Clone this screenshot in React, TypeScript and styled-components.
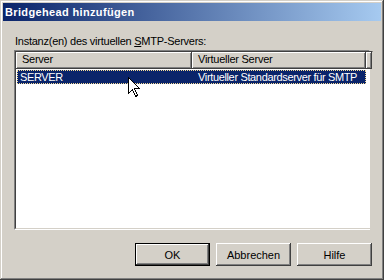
import React from "react";
import styled, { createGlobalStyle } from "styled-components";

const Global = createGlobalStyle`
  html, body { margin: 0; padding: 0; background: #d4d0c8; }
  body { font-family: "Liberation Sans", Arial, sans-serif; font-size: 11px; }
`;

const Window = styled.div`
  position: relative;
  width: 384px;
  height: 280px;
  box-sizing: border-box;
  padding: 3px;
  background: #d4d0c8;
  box-shadow: inset -1px -1px #404040, inset 1px 1px #d4d0c8,
    inset -2px -2px #808080, inset 2px 2px #ffffff;
  display: flex;
  flex-direction: column;
  overflow: hidden;
`;

const TitleBar = styled.div`
  height: 18px;
  display: flex;
  align-items: center;
  padding-left: 2px;
  background: linear-gradient(to right, #0a246a, #a6caf0);
  color: #ffffff;
  font-weight: bold;
  font-size: 11px;
  letter-spacing: 0.35px;
`;

const Body = styled.div`
  flex: 1;
  display: flex;
  flex-direction: column;
  padding: 14px 0 0 11px;
`;

const Label = styled.div`
  height: 13px;
  line-height: 13px;
  padding-left: 1px;
  color: #000;
  margin-bottom: 2px;
  letter-spacing: -0.25px;
  u { text-decoration: underline; }
`;

const ListBox = styled.div`
  width: 356px;
  height: 180px;
  box-sizing: border-box;
  background: #ffffff;
  border-style: solid;
  border-width: 1px;
  border-color: #808080 #ffffff #ffffff #808080;
  display: flex;
`;

const ListInner = styled.div`
  flex: 1;
  border-style: solid;
  border-width: 1px;
  border-color: #404040 #d4d0c8 #d4d0c8 #404040;
  display: flex;
  flex-direction: column;
`;

const Header = styled.div`
  display: flex;
  height: 17px;
  background: #d4d0c8;
`;

const HeaderCell = styled.div<{ $w?: number }>`
  box-sizing: border-box;
  ${(p) => (p.$w ? `width: ${p.$w}px;` : "flex: 1;")}
  height: 17px;
  line-height: 14px;
  padding-left: 6px;
  color: #000;
  letter-spacing: -0.25px;
  white-space: nowrap;
  overflow: hidden;
  box-shadow: inset -1px -1px #404040, inset 1px 1px #ffffff,
    inset -2px -2px #808080;
`;

const Row = styled.div<{ $selected?: boolean }>`
  display: flex;
  height: 14px;
  margin: 1px 0 0 1px;
  width: 349px;
  box-sizing: border-box;
  background: ${(p) => (p.$selected ? "#0a246a" : "transparent")};
  color: ${(p) => (p.$selected ? "#ffffff" : "#000")};
  outline: ${(p) => (p.$selected ? "1px dotted #f5db95" : "none")};
  outline-offset: -1px;
`;

const Cell = styled.div<{ $w?: number }>`
  ${(p) => (p.$w ? `width: ${p.$w}px;` : "flex: 1;")}
  line-height: 14px;
  padding-left: 3px;
  white-space: nowrap;
  letter-spacing: -0.35px;
`;

const ButtonRow = styled.div`
  display: flex;
  justify-content: flex-end;
  gap: 6px;
  margin-top: 13px;
  padding-right: 9px;
`;

const Button = styled.div<{ $default?: boolean }>`
  width: 75px;
  height: 23px;
  box-sizing: border-box;
  display: flex;
  align-items: center;
  justify-content: center;
  color: #000;
  background: #d4d0c8;
  ${(p) =>
    p.$default
      ? `border: 1px solid #000;
         box-shadow: inset -1px -1px #404040, inset 1px 1px #ffffff, inset -2px -2px #808080;`
      : `box-shadow: inset -1px -1px #404040, inset 1px 1px #ffffff, inset -2px -2px #808080, inset 2px 2px #d4d0c8;`}
`;

const Cursor = styled.svg`
  position: absolute;
  left: 128px;
  top: 77px;
`;

export default function App() {
  return (
    <>
      <Global />
      <Window>
        <TitleBar>Bridgehead hinzufügen</TitleBar>
        <Body>
          <Label>
            Instanz(en) des virtuellen <u>S</u>MTP-Servers:
          </Label>
          <ListBox>
            <ListInner>
              <Header>
                <HeaderCell $w={176}>Server</HeaderCell>
                <HeaderCell $w={174}>Virtueller Server</HeaderCell>
                <HeaderCell />
              </Header>
              <Row $selected>
                <Cell $w={175}>SERVER</Cell>
                <Cell>Virtueller Standardserver für SMTP</Cell>
              </Row>
            </ListInner>
          </ListBox>
          <ButtonRow>
            <Button $default>OK</Button>
            <Button>Abbrechen</Button>
            <Button>Hilfe</Button>
          </ButtonRow>
        </Body>
        <Cursor width="13" height="21" viewBox="0 0 13 21" shapeRendering="crispEdges">
          <path
            d="M0.5 0.5 L0.5 16.5 L4.5 12.5 L7.5 19.5 L9.5 18.5 L6.5 11.5 L11.5 11.5 Z"
            fill="#ffffff"
            stroke="#000000"
            strokeWidth="1"
            strokeLinejoin="miter"
          />
        </Cursor>
      </Window>
    </>
  );
}
